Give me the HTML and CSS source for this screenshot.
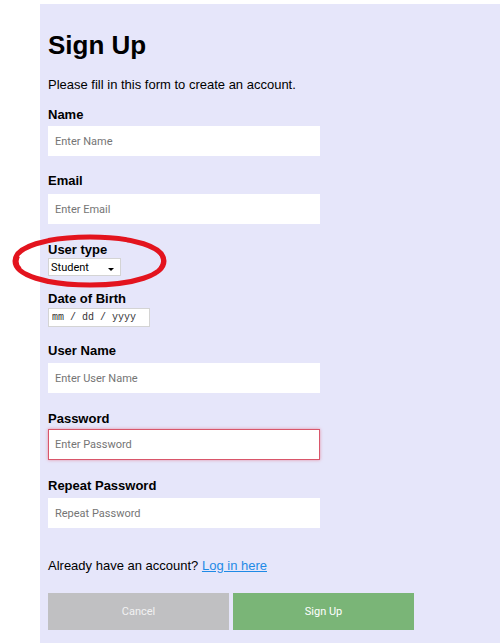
FILE: index.html
```html
<!DOCTYPE html>
<html lang="en">
<head>
<meta charset="utf-8">
<title>Sign Up</title>
<link rel="stylesheet" href="styles.css">
</head>
<body>
<form class="panel">
  <h1 class="title">Sign Up</h1>
  <p class="intro">Please fill in this form to create an account.</p>

  <label class="lbl lbl-name" for="name">Name</label>
  <input class="txt txt-name" id="name" type="text" placeholder="Enter Name">

  <label class="lbl lbl-email" for="email">Email</label>
  <input class="txt txt-email" id="email" type="text" placeholder="Enter Email">

  <label class="lbl lbl-type" for="utype">User type</label>
  <div class="select-wrap">
    <select class="sel" id="utype">
      <option>Student</option>
      <option>Teacher</option>
    </select>
    <svg class="sel-arrow" width="6" height="3" viewBox="0 0 6 3"><path d="M0 0H6L3 3Z" fill="#000"/></svg>
  </div>

  <label class="lbl lbl-dob" for="dob">Date of Birth</label>
  <input class="date" id="dob" type="text" placeholder="mm / dd / yyyy">

  <label class="lbl lbl-user" for="uname">User Name</label>
  <input class="txt txt-user" id="uname" type="text" placeholder="Enter User Name">

  <label class="lbl lbl-pass" for="pw">Password</label>
  <input class="txt txt-pass" id="pw" type="password" placeholder="Enter Password">

  <label class="lbl lbl-rep" for="pw2">Repeat Password</label>
  <input class="txt txt-rep" id="pw2" type="password" placeholder="Repeat Password">

  <p class="already">Already have an account? <a href="#" class="login">Log in here</a></p>

  <div class="buttons">
    <button type="button" class="btn btn-cancel">Cancel</button>
    <button type="button" class="btn btn-signup">Sign Up</button>
  </div>

  <svg class="circle" width="170" height="62" viewBox="0 0 170 62">
    <path d="M84 5 C128 5 158 15 158 29 C158 43 128 53 84 53 C40 53 9 43 9 29 C9 15 40 5 84 5 Z" fill="none" stroke="#e3141e" stroke-width="5"/>
    <path d="M12 24 C10 28 10 33 14 37 M155 22 C158 27 158 32 154 37" fill="none" stroke="#e3141e" stroke-width="4"/>
  </svg>
</form>
</body>
</html>
```

FILE: styles.css
```css
html, body {
  margin: 0;
  padding: 0;
  background: #ffffff;
  overflow: hidden;
}

.panel {
  position: relative;
  box-sizing: border-box;
  margin: 4px 0 0 40px;
  width: 460px;
  height: 639px;
  padding: 26px 0 0 8px;
  background: #e6e6fa;
  font-family: "Liberation Sans", Arial, sans-serif;
  color: #000;
}

.title {
  margin: 0;
  font-size: 26px;
  line-height: 30px;
  font-weight: bold;
}

.intro {
  margin: 17px 0 0;
  font-size: 13px;
  line-height: 16px;
}

.lbl {
  display: block;
  font-size: 13px;
  line-height: 16px;
  font-weight: bold;
}

.lbl-name { margin-top: 14px; }
.lbl-email { margin-top: 17px; }
.lbl-type { margin-top: 18px; }
.lbl-dob { margin-top: 15px; }
.lbl-user { margin-top: 16px; }
.lbl-pass { margin-top: 18px; }
.lbl-rep { margin-top: 18px; }

.txt {
  display: block;
  box-sizing: border-box;
  width: 272px;
  height: 30px;
  margin: 4px 0 0;
  padding: 0 0 0 7px;
  border: none;
  outline: none;
  background: #fff;
  font-family: Roboto, "Liberation Sans", sans-serif;
  font-size: 11px;
  color: #333;
}

.txt::placeholder {
  color: #757575;
}

.txt-name { margin-top: 3px; }
.txt-email { margin-top: 5px; }
.txt-user { margin-top: 4px; }
.txt-pass {
  margin-top: 2px;
  height: 31px;
  padding-left: 6px;
  border: 1px solid #d9566a;
  box-shadow: 0 0 3px rgba(230, 90, 110, 0.6);
}
.txt-rep { margin-top: 4px; }

.select-wrap {
  position: relative;
  width: 73px;
  height: 18px;
  margin-top: 0;
}

.sel {
  display: block;
  box-sizing: border-box;
  width: 73px;
  height: 18px;
  margin: 0;
  padding: 0 0 0 2px;
  border: 1px solid #d4d4d4;
  border-radius: 0;
  background: #fff;
  appearance: none;
  -webkit-appearance: none;
  font-family: Roboto, "Liberation Sans", sans-serif;
  font-size: 11px;
  color: #000;
  outline: none;
}

.sel-arrow {
  position: absolute;
  left: 60px;
  top: 10px;
  pointer-events: none;
}

.date {
  display: block;
  box-sizing: border-box;
  width: 102px;
  height: 19px;
  margin: 1px 0 0;
  padding: 0 0 0 3px;
  border: 1px solid #d4d4d4;
  background: #fff;
  outline: none;
  font-family: "Liberation Mono", "Courier New", monospace;
  font-size: 10px;
}

.date::placeholder {
  color: #333;
}

.already {
  margin: 30px 0 0;
  font-size: 13px;
  line-height: 16px;
}

.login {
  color: #1e8ae6;
  text-decoration: underline;
}

.buttons {
  display: flex;
  gap: 4px;
  margin-top: 19px;
}

.btn {
  width: 181px;
  height: 37px;
  margin: 0;
  padding: 0;
  border: none;
  font-family: Roboto, "Liberation Sans", sans-serif;
  font-size: 11px;
  color: #fff;
  cursor: pointer;
}

.btn-cancel {
  background: #c0c0c2;
  color: #f2f2f2;
}

.btn-signup {
  background: #7ab577;
}

.circle {
  position: absolute;
  left: -34px;
  top: 228px;
  pointer-events: none;
}
```
